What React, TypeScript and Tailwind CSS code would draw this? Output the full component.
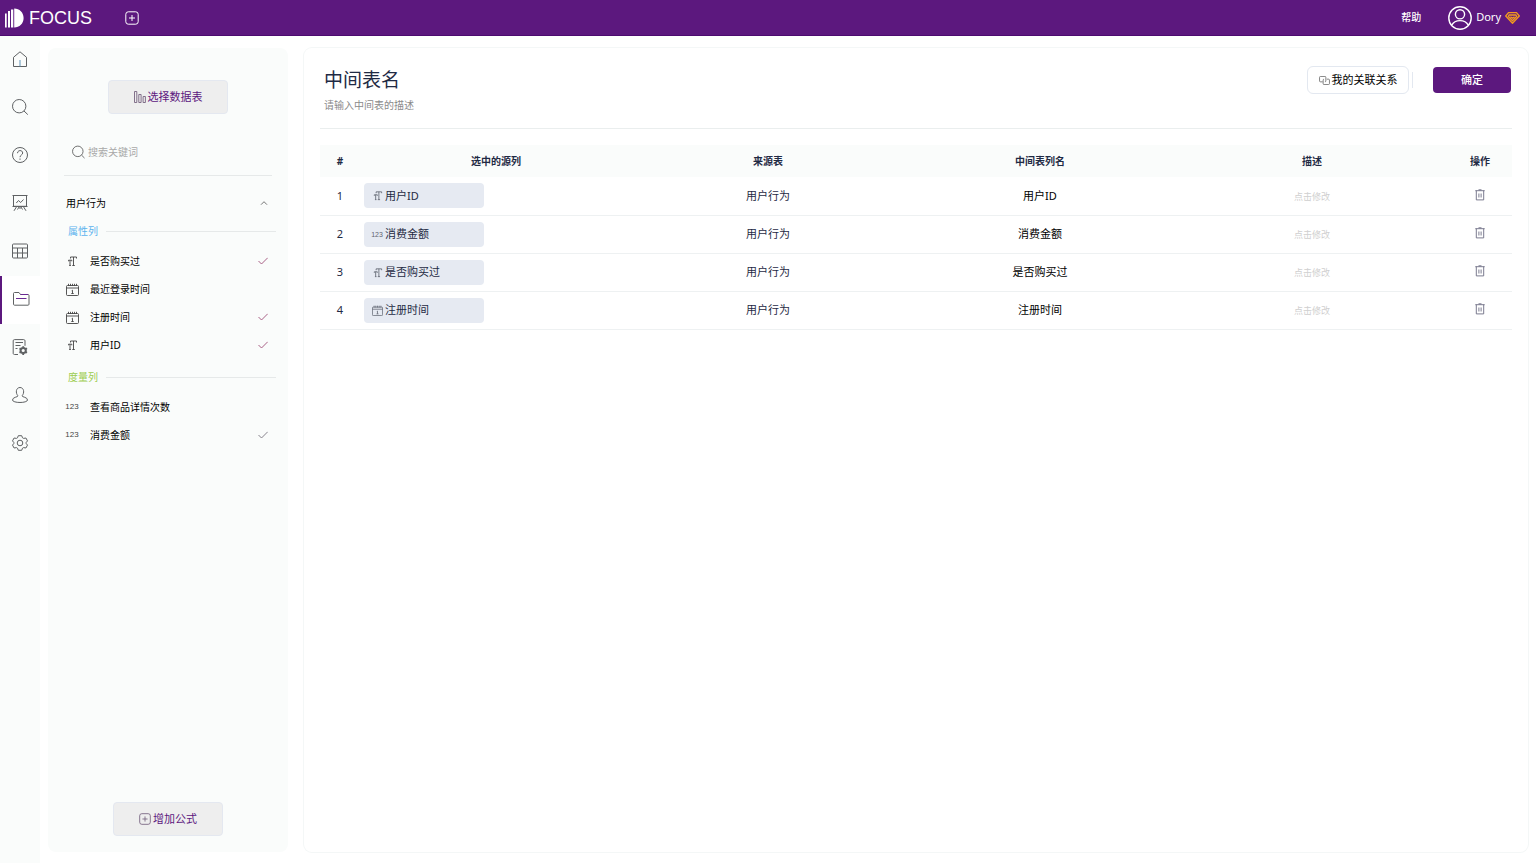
// src/App.tsx

import { useState } from 'react';
import type { ReactNode } from 'react';

type ColumnType = 'text' | 'date' | 'number';

interface SourceColumn {
  name: string;
  type: ColumnType;
  checked: boolean;
  tone?: string;
}

const attributeColumns: SourceColumn[] = [
  { name: '是否购买过', type: 'text', checked: true, tone: 'text-[#a05078]' },
  { name: '最近登录时间', type: 'date', checked: false },
  { name: '注册时间', type: 'date', checked: true, tone: 'text-[#a05078]' },
  { name: '用户ID', type: 'text', checked: true, tone: 'text-[#a05078]' },
];

const measureColumns: SourceColumn[] = [
  { name: '查看商品详情次数', type: 'number', checked: false },
  { name: '消费金额', type: 'number', checked: true, tone: 'text-[#7a7680]' },
];

const rows: { name: string; type: ColumnType; source: string }[] = [
  { name: '用户ID', type: 'text', source: '用户行为' },
  { name: '消费金额', type: 'number', source: '用户行为' },
  { name: '是否购买过', type: 'text', source: '用户行为' },
  { name: '注册时间', type: 'date', source: '用户行为' },
];

// 左侧导航图标
const navItems: { label: string; icon: ReactNode }[] = [
  {
    label: '首页',
    icon: (
      <>
        <path d="M1.5 6.3 8 .8l6.500 5.500V15.500h-13z" />
        <path d="M8 15.500V9" stroke="#5f93b8" />
      </>
    ),
  },
  {
    label: '搜索',
    icon: (
      <>
        <circle cx="7.200" cy="7.200" r="6.700" />
        <path d="m12 12 3.800 3.600" />
      </>
    ),
  },
  {
    label: '问答',
    icon: (
      <>
        <circle cx="8" cy="8" r="7.500" />
        <path d="M5.500 6.200C5.500 2.700 10.700 2.800 10.700 6c0 1.900-2.700 2-2.700 4.200M8 11.500v1.300" />
      </>
    ),
  },
  {
    label: '数据看板',
    icon: (
      <>
        <path d="M.5.500h15M1.500.500v10.800h13V.500M.5 11.500h15M4.500 11.800 2 15.800M11.500 11.800l2.500 4M8 11.500v2.500M7 12l-1.500 2.500M9 12l1.500 2.500" />
        <path d="m4.300 8 2.200-2.500 2.200 2L11.500 4.500" />
      </>
    ),
  },
  {
    label: '数据表',
    icon: (
      <>
        <rect x=".5" y="1" width="15" height="14" rx="1" />
        <path d="M.5 5h15M.5 10h15M5.500 5v10M10.500 5v10" />
      </>
    ),
  },
  {
    label: '资源管理',
    icon: (
      <>
        <path d="M.5 13.200V2.500c0-.6.400-1 1-1h4.500L7.500 3.500H15c.6 0 1 .4 1 1v8.700c0 .600-.4 1-1 1H1.500c-.6 0-1-.4-1-1z" />
        <path d="M7.500 3.500H15M3 7.500h10.500" stroke="#6a2a92" strokeWidth="1.200" />
      </>
    ),
  },
  {
    label: '日志',
    icon: (
      <>
        <path d="M6 15.500H2.500c-1 0-1.300-.6-1.300-1.300V1.800c0-.7.4-1.200 1.300-1.200h9.200c.8 0 1.300.5 1.300 1.200v5M3.500 3.500h7.500M3.500 6.500h5M3.500 9.500h2" />
        <circle cx="11.200" cy="11.500" r="2.600" strokeWidth="2" />
        <path
          d="M11.200 7.200v1.300M11.200 14.500v1.400M7.500 9.400l1.100.600M13.800 13l1.200.700M7.500 13.700l1.100-.7M13.800 10l1.200-.7"
          strokeWidth="1.800"
        />
      </>
    ),
  },
  {
    label: '用户',
    icon: (
      <path d="M6 8.800C3.200 6 4 .5 8 .5s4.800 5.500 2 8.300c0 1.400 5.500 1.200 5.500 4.200 0 3.300-15 3.300-15 0 0-3 5.500-2.800 5.500-4.200z" />
    ),
  },
  {
    label: '系统设置',
    icon: (
      <>
        <path d="M6.300.7h3.400l.8 2.100 1.100.600 2.300-.4 1.600 2.900-1.400 1.700v.8l1.400 1.700-1.600 2.900-2.300-.4-1.100.6-.8 2.100H6.300l-.8-2.100-1.100-.6-2.300.4L.5 10.100l1.400-1.700v-.8L.5 5.900 2.100 3l2.300.4 1.100-.6z" />
        <circle cx="8" cy="8" r="2.800" />
      </>
    ),
  },
];

function TypeIcon({ type, small = false }: { type: ColumnType; small?: boolean }) {
  if (type === 'number') {
    return (
      <span
        className={`font-["Liberation_Sans",sans-serif] leading-none ${small ? 'text-[7px]' : 'text-[8px]'}`}
      >
        123
      </span>
    );
  }
  if (type === 'date') {
    return (
      <svg
        viewBox="0 0 13 13"
        className={small ? 'h-[11px] w-[11px]' : 'h-[13px] w-[13px]'}
        fill="none"
        stroke="currentColor"
        strokeWidth="0.9"
      >
        <rect x=".5" y="2.500" width="12" height="10" rx="1" />
        <path d="M.5 5h12M2.500.800v2.200M4.500.800v2.200M6.500.800v2.200M8.500.800v2.200M10.500.800v2.200M5.700 7.700l.8-.5v3.300M5.300 10.500h2.400" />
      </svg>
    );
  }
  return (
    <svg
      viewBox="0 0 12 12"
      className={small ? 'h-[11px] w-[11px]' : 'h-3 w-3'}
      fill="none"
      stroke="currentColor"
      strokeWidth="0.9"
    >
      <path d="M4.500 3.500V2h6v1.500M7.500 2v8.500M6.300 10.500h2.500M2.500 6.300V5.200h3.300v1.100M4 5.200v5.300M3.200 10.500h1.700" />
    </svg>
  );
}

function PlusSquare({ className }: { className: string }) {
  return (
    <svg viewBox="0 0 14 14" className={className} fill="none" stroke="currentColor">
      <rect x=".8" y=".8" width="12.400" height="12.400" rx="2.500" />
      <path d="M7 4v6M4 7h6" />
    </svg>
  );
}

function ColumnGroup({
  title,
  color,
  columns,
}: {
  title: string;
  color: string;
  columns: SourceColumn[];
}) {
  return (
    <section className="pb-1">
      <div className="mb-[2px] flex h-7 items-center gap-2 pr-3 pl-5">
        <h3 className={`text-[10px] ${color}`}>{title}</h3>
        <div className="h-px flex-1 bg-[#e6e9e9]" />
      </div>
      <ul>
        {columns.map((col) => (
          <li key={col.name} className="flex h-7 items-center pr-5 pl-4 text-[10px] text-black">
            <span className="flex w-4 shrink-0 items-center justify-center text-[#444]">
              <TypeIcon type={col.type} />
            </span>
            <span className="flex-1 pl-[10px]">{col.name}</span>
            {col.checked && (
              <svg
                viewBox="0 0 10 8"
                className={`h-2 w-[10px] ${col.tone}`}
                fill="none"
                stroke="currentColor"
                strokeWidth="0.9"
              >
                <path d="m.5 4 3 3L9.700.8" />
              </svg>
            )}
          </li>
        ))}
      </ul>
    </section>
  );
}

export default function App() {
  const [active, setActive] = useState(5);
  const [open, setOpen] = useState(true);
  const [title, setTitle] = useState('中间表名');
  const [desc, setDesc] = useState('');
  const [keyword, setKeyword] = useState('');

  const match = (col: SourceColumn) => col.name.includes(keyword);

  return (
    <div className='flex h-screen flex-col bg-white font-["Noto_Sans","Noto_Sans_CJK_SC",sans-serif] text-[11px] text-[#1f2a44]'>
      {/* 顶部栏 */}
      <header className="flex h-9 shrink-0 items-center border-b border-[#4d0b70] bg-[#5c187e] pr-4 pl-1 text-white">
        <a href="#" className="flex items-center gap-[5px]">
          <svg viewBox="0 0 20 20" className="h-5 w-5" fill="currentColor">
            <path d="M1 5.500h1.700V19.500H1zM4 3h2v16.500H4zM7 1.500h2.300v18H7zM10.200.500C15.500.500 19.600 4.500 19.600 10s-4.100 9.500-9.400 9.500z" />
          </svg>
          <span className='font-["Liberation_Sans",sans-serif] text-lg'>FOCUS</span>
        </a>
        <button aria-label="新建" className="ml-[33px]">
          <PlusSquare className="h-[14px] w-[14px]" />
        </button>
        <a href="#" className="ml-auto text-[10px] font-medium">
          帮助
        </a>
        <button className="ml-[27px] flex items-center gap-1 text-[11px]">
          <svg viewBox="0 0 24 24" className="h-6 w-6" fill="none" stroke="currentColor" strokeWidth="1.400">
            <circle cx="12" cy="12" r="11.200" />
            <circle cx="12" cy="8.300" r="4.600" />
            <path d="M3.700 19.300C5.500 15.800 8.500 14.600 12 14.600s6.500 1.200 8.300 4.700" />
          </svg>
          Dory
          <svg viewBox="0 0 15 12" className="h-3 w-[15px]" fill="none" stroke="#f29a1f" strokeWidth="1.300">
            <path d="M3.500.7h8L14.300 4 7.500 11.300.7 4z" />
            <path d="M4.200 3h6.600l.9 1.500-4.200 4.300-4.200-4.300zM5.500 4.800l2 1.500 2-1.500" />
          </svg>
        </button>
      </header>

      <div className="flex min-h-0 flex-1">
        {/* 导航 */}
        <nav className="w-10 shrink-0 bg-[#fafcfb]">
          {navItems.map((item, idx) => (
            <button
              key={item.label}
              aria-label={item.label}
              onClick={() => setActive(idx)}
              className={`flex h-12 w-full items-center justify-center pb-[2px] ${
                active === idx ? 'border-l-2 border-[#5c187e] bg-white' : ''
              }`}
            >
              <svg
                viewBox="0 0 16 16"
                className="h-4 w-4 overflow-visible"
                fill="none"
                stroke="#5e6163"
                strokeWidth="1"
              >
                {item.icon}
              </svg>
            </button>
          ))}
        </nav>

        <div className="flex min-w-0 flex-1 gap-4 pt-3 pr-2 pb-[11px] pl-2">
          {/* 数据源面板 */}
          <aside className="flex w-60 shrink-0 flex-col rounded-lg bg-[#fafcfb] py-4">
            <button className="mx-auto mt-4 flex h-[34px] w-[120px] items-center justify-center gap-[2px] rounded border border-[#e4e8f0] bg-[#eeeeee] text-[11px] text-[#5c187e]">
              <svg viewBox="0 0 12 12" className="h-3 w-3" fill="none" stroke="#76627f" strokeWidth="0.9">
                <path d="M.5.500h2.300v11H.5zM4.800 3.500h2.300v8H4.800zM9.100 5.500h2.300v6H9.100z" />
              </svg>
              选择数据表
            </button>

            <label className="mx-4 mt-[14px] flex h-12 items-center gap-[3px] border-b border-[#e6e9e9] pl-2">
              <svg viewBox="0 0 14 14" className="h-[14px] w-[14px]" fill="none" stroke="#555" strokeWidth="0.9">
                <circle cx="6.300" cy="6.300" r="5.700" />
                <path d="m10.400 10.400 3.200 3.200" />
              </svg>
              <input
                aria-label="搜索关键词"
                value={keyword}
                onChange={(e) => setKeyword(e.target.value)}
                placeholder="搜索关键词"
                className="w-full min-w-0 bg-transparent pt-[2px] text-[10px] outline-none placeholder:text-[#a9a9a9]"
              />
            </label>

            <button
              onClick={() => setOpen(!open)}
              aria-expanded={open}
              className="mt-[13px] flex h-7 items-center justify-between pr-5 pl-[18px] text-[10px] text-black"
            >
              用户行为
              <svg viewBox="0 0 8 6" className="h-[6px] w-2" fill="none" stroke="#666" strokeWidth="0.9">
                <path d="m1 4.700 3-3 3 3" />
              </svg>
            </button>
            {open && (
              <div className="min-h-0 flex-1">
                <ColumnGroup title="属性列" color="text-[#5cb3ee]" columns={attributeColumns.filter(match)} />
                <ColumnGroup title="度量列" color="text-[#9ccc50]" columns={measureColumns.filter(match)} />
              </div>
            )}

            <button className="mx-auto mt-auto flex h-[34px] w-[110px] items-center justify-center gap-[2px] rounded border border-[#e4e8f0] bg-[#eeeeee] text-[11px] text-[#5c187e]">
              <PlusSquare className="h-3 w-3 text-[#76627f]" />
              增加公式
            </button>
          </aside>

          {/* 中间表 */}
          <main className="min-w-0 flex-1 rounded-lg px-4 ring-1 ring-[#f4f7f7]">
            <div className="flex h-[81px] items-start border-b border-[#eaeeee] pt-[15px]">
              <div className="flex flex-1 flex-col pl-1">
                <input
                  aria-label="中间表名"
                  value={title}
                  onChange={(e) => setTitle(e.target.value)}
                  className="h-8 bg-transparent text-[19px] outline-none"
                />
                <input
                  aria-label="中间表描述"
                  value={desc}
                  onChange={(e) => setDesc(e.target.value)}
                  placeholder="请输入中间表的描述"
                  className="h-5 bg-transparent text-[10px] outline-none placeholder:text-[#8a8a8a]"
                />
              </div>
              <div className="flex items-center pt-[3px] pr-px">
                <button className="flex h-7 w-[102px] items-center justify-center gap-[2px] rounded-md border border-[#e3e8f0] bg-white text-[11px] text-black">
                  <svg viewBox="0 0 12 10" className="h-[9px] w-[11px]" fill="none" stroke="#666" strokeWidth="0.9">
                    <path d="M4 6.500H1.500c-.6 0-1-.3-1-1v-4c0-.7.4-1 1-1h5c.6 0 1 .3 1 1v4c0 .7-.4 1-1 1" />
                    <path d="M8.500 3.500h2c.6 0 1 .3 1 1v4c0 .7-.4 1-1 1h-5c-.6 0-1-.3-1-1v-4c0-.7.4-1 1-1" />
                  </svg>
                  我的关联关系
                </button>
                <div className="mr-5 ml-[3px] h-4 w-px bg-[#e3e8f0]" />
                <button className="h-[26px] w-[78px] rounded bg-[#5c187e] text-[11px] font-medium text-white">
                  确定
                </button>
              </div>
            </div>

            <table className="mt-4 w-full table-fixed border-collapse text-center">
              <thead>
                <tr className="h-8 bg-[#fafcfb] text-[10px]">
                  <th className="w-10">#</th>
                  <th>选中的源列</th>
                  <th>来源表</th>
                  <th>中间表列名</th>
                  <th>描述</th>
                  <th className="w-16">操作</th>
                </tr>
              </thead>
              <tbody>
                {rows.map((row, idx) => (
                  <tr key={row.name} className="h-[38px] border-b border-[#eef1f2]">
                    <td>{idx + 1}</td>
                    <td className="px-1">
                      <div className="flex h-[25px] w-[120px] items-center gap-[2px] rounded-sm bg-[#e6eaf2] pl-[7px]">
                        <span className="flex w-3 shrink-0 justify-center text-[#5f6470]">
                          <TypeIcon type={row.type} small />
                        </span>
                        {row.name}
                      </div>
                    </td>
                    <td>{row.source}</td>
                    <td>
                      <button className="text-black">{row.name}</button>
                    </td>
                    <td>
                      <button className="text-[9px] text-[#cfcfcf]">点击修改</button>
                    </td>
                    <td>
                      <button aria-label="删除" className="block w-full pb-[2px]">
                        <svg
                          viewBox="0 0 10 12"
                          className="mx-auto h-3 w-[10px]"
                          fill="none"
                          stroke="#6c6c82"
                          strokeWidth="0.9"
                        >
                          <path d="M.3 1.700h9.400M3.500.800h3M1.300 1.700v9.200h7.400V1.700" />
                          <path d="M3.900 4.500v4M6.100 4.500v4" />
                        </svg>
                      </button>
                    </td>
                  </tr>
                ))}
              </tbody>
            </table>
          </main>
        </div>
      </div>
    </div>
  );
}
